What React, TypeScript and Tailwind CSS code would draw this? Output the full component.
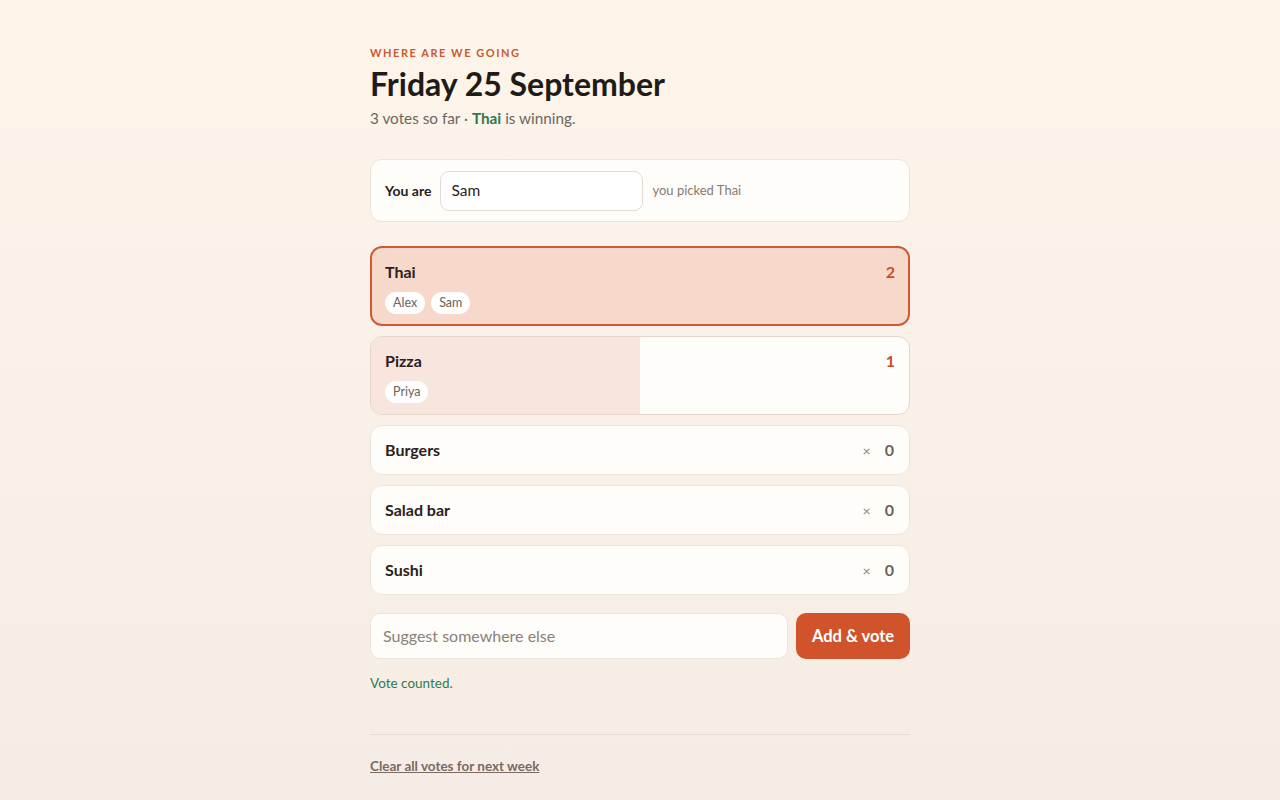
import React from "react";

const font = { fontFamily: "Lato, 'Noto Sans', sans-serif" };

function Chip({ name }: { name: string }) {
  return (
    <span className="inline-flex h-[22px] items-center rounded-full bg-white px-[8px] text-[12.5px] text-[#6b625c]">
      {name}
    </span>
  );
}

function SmallRow({ name }: { name: string }) {
  return (
    <div className="flex h-[50px] items-center justify-between rounded-[12px] border border-[#ece4db] bg-[#fffdf9] px-[14px]">
      <span className="text-[16px] font-bold text-[#2a211c]">{name}</span>
      <div className="flex items-center gap-[14px] pr-[1px]">
        <span className="text-[14px] text-[#8a817a]">×</span>
        <span className="text-[16px] font-bold text-[#6b6159]">0</span>
      </div>
    </div>
  );
}

export default function App() {
  return (
    <div
      className="min-h-[800px] w-full bg-gradient-to-b from-[#fdf5ea] to-[#f5ede5]"
      style={font}
    >
      <div className="mx-auto w-[540px] pt-[45px]">
        <div className="text-[11px] font-bold tracking-[0.14em] text-[#c85a33]">WHERE ARE WE GOING</div>
        <h1 className="mt-[2px] text-[32px] font-bold leading-[40px] text-[#221a16]">Friday 25 September</h1>
        <p className="mt-[3px] text-[15.3px] text-[#6f655e]">
          3 votes so far · <span className="font-bold text-[#2f7a4e]">Thai</span> is winning.
        </p>

        <div className="mt-[30px] flex h-[63px] items-center rounded-[12px] border border-[#ebe3da] bg-[#fffdf9] px-[14px]">
          <span className="text-[14px] font-bold text-[#2a211c]">You are</span>
          <div className="ml-[9px] flex h-[40px] w-[203px] items-center rounded-[9px] border border-[#e3dbd3] bg-white px-[10px] text-[15.5px] text-[#2a211c]">
            Sam
          </div>
          <span className="ml-[9px] text-[13px] text-[#857a72]">you picked Thai</span>
        </div>

        <div className="mt-[24px] flex flex-col gap-[10px]">
          <div className="flex h-[80px] flex-col rounded-[12px] border-2 border-[#d05a36] bg-[#f7d9cb] px-[13px] pt-[12px]">
            <div className="flex items-center justify-between">
              <span className="text-[16px] font-bold text-[#2a211c]">Thai</span>
              <span className="text-[16px] font-bold text-[#c84e2b]">2</span>
            </div>
            <div className="mt-[8px] flex gap-[6px]">
              <Chip name="Alex" />
              <Chip name="Sam" />
            </div>
          </div>

          <div className="relative h-[79px] overflow-hidden rounded-[12px] border border-[#e2d6cd] bg-[#fffdf9]">
            <div className="absolute inset-y-0 left-0 w-1/2 bg-[#f8e5dd]" />
            <div className="relative flex flex-col px-[14px] pt-[12px]">
              <div className="flex items-center justify-between">
                <span className="text-[16px] font-bold text-[#2a211c]">Pizza</span>
                <span className="text-[16px] font-bold text-[#c84e2b]">1</span>
              </div>
              <div className="mt-[8px] flex gap-[6px]">
                <Chip name="Priya" />
              </div>
            </div>
          </div>

          <SmallRow name="Burgers" />
          <SmallRow name="Salad bar" />
          <SmallRow name="Sushi" />
        </div>

        <div className="mt-[18px] flex gap-[8px]">
          <div className="flex h-[46px] flex-1 items-center rounded-[10px] border border-[#ebe3da] bg-[#fffdf9] px-[12px] text-[16px] text-[#8a817a]">
            Suggest somewhere else
          </div>
          <button className="h-[46px] w-[114px] rounded-[10px] bg-[#d0532b] text-[16.5px] font-bold text-white">
            Add &amp; vote
          </button>
        </div>

        <p className="mt-[14px] text-[13.5px] text-[#2f7a4e]">Vote counted.</p>

        <div className="mt-[40px] h-px bg-[#e6ddd4]" />

        <div className="mt-[18px]">
          <a className="text-[13.5px] font-bold text-[#7a6a62] underline">Clear all votes for next week</a>
        </div>
      </div>
    </div>
  );
}
